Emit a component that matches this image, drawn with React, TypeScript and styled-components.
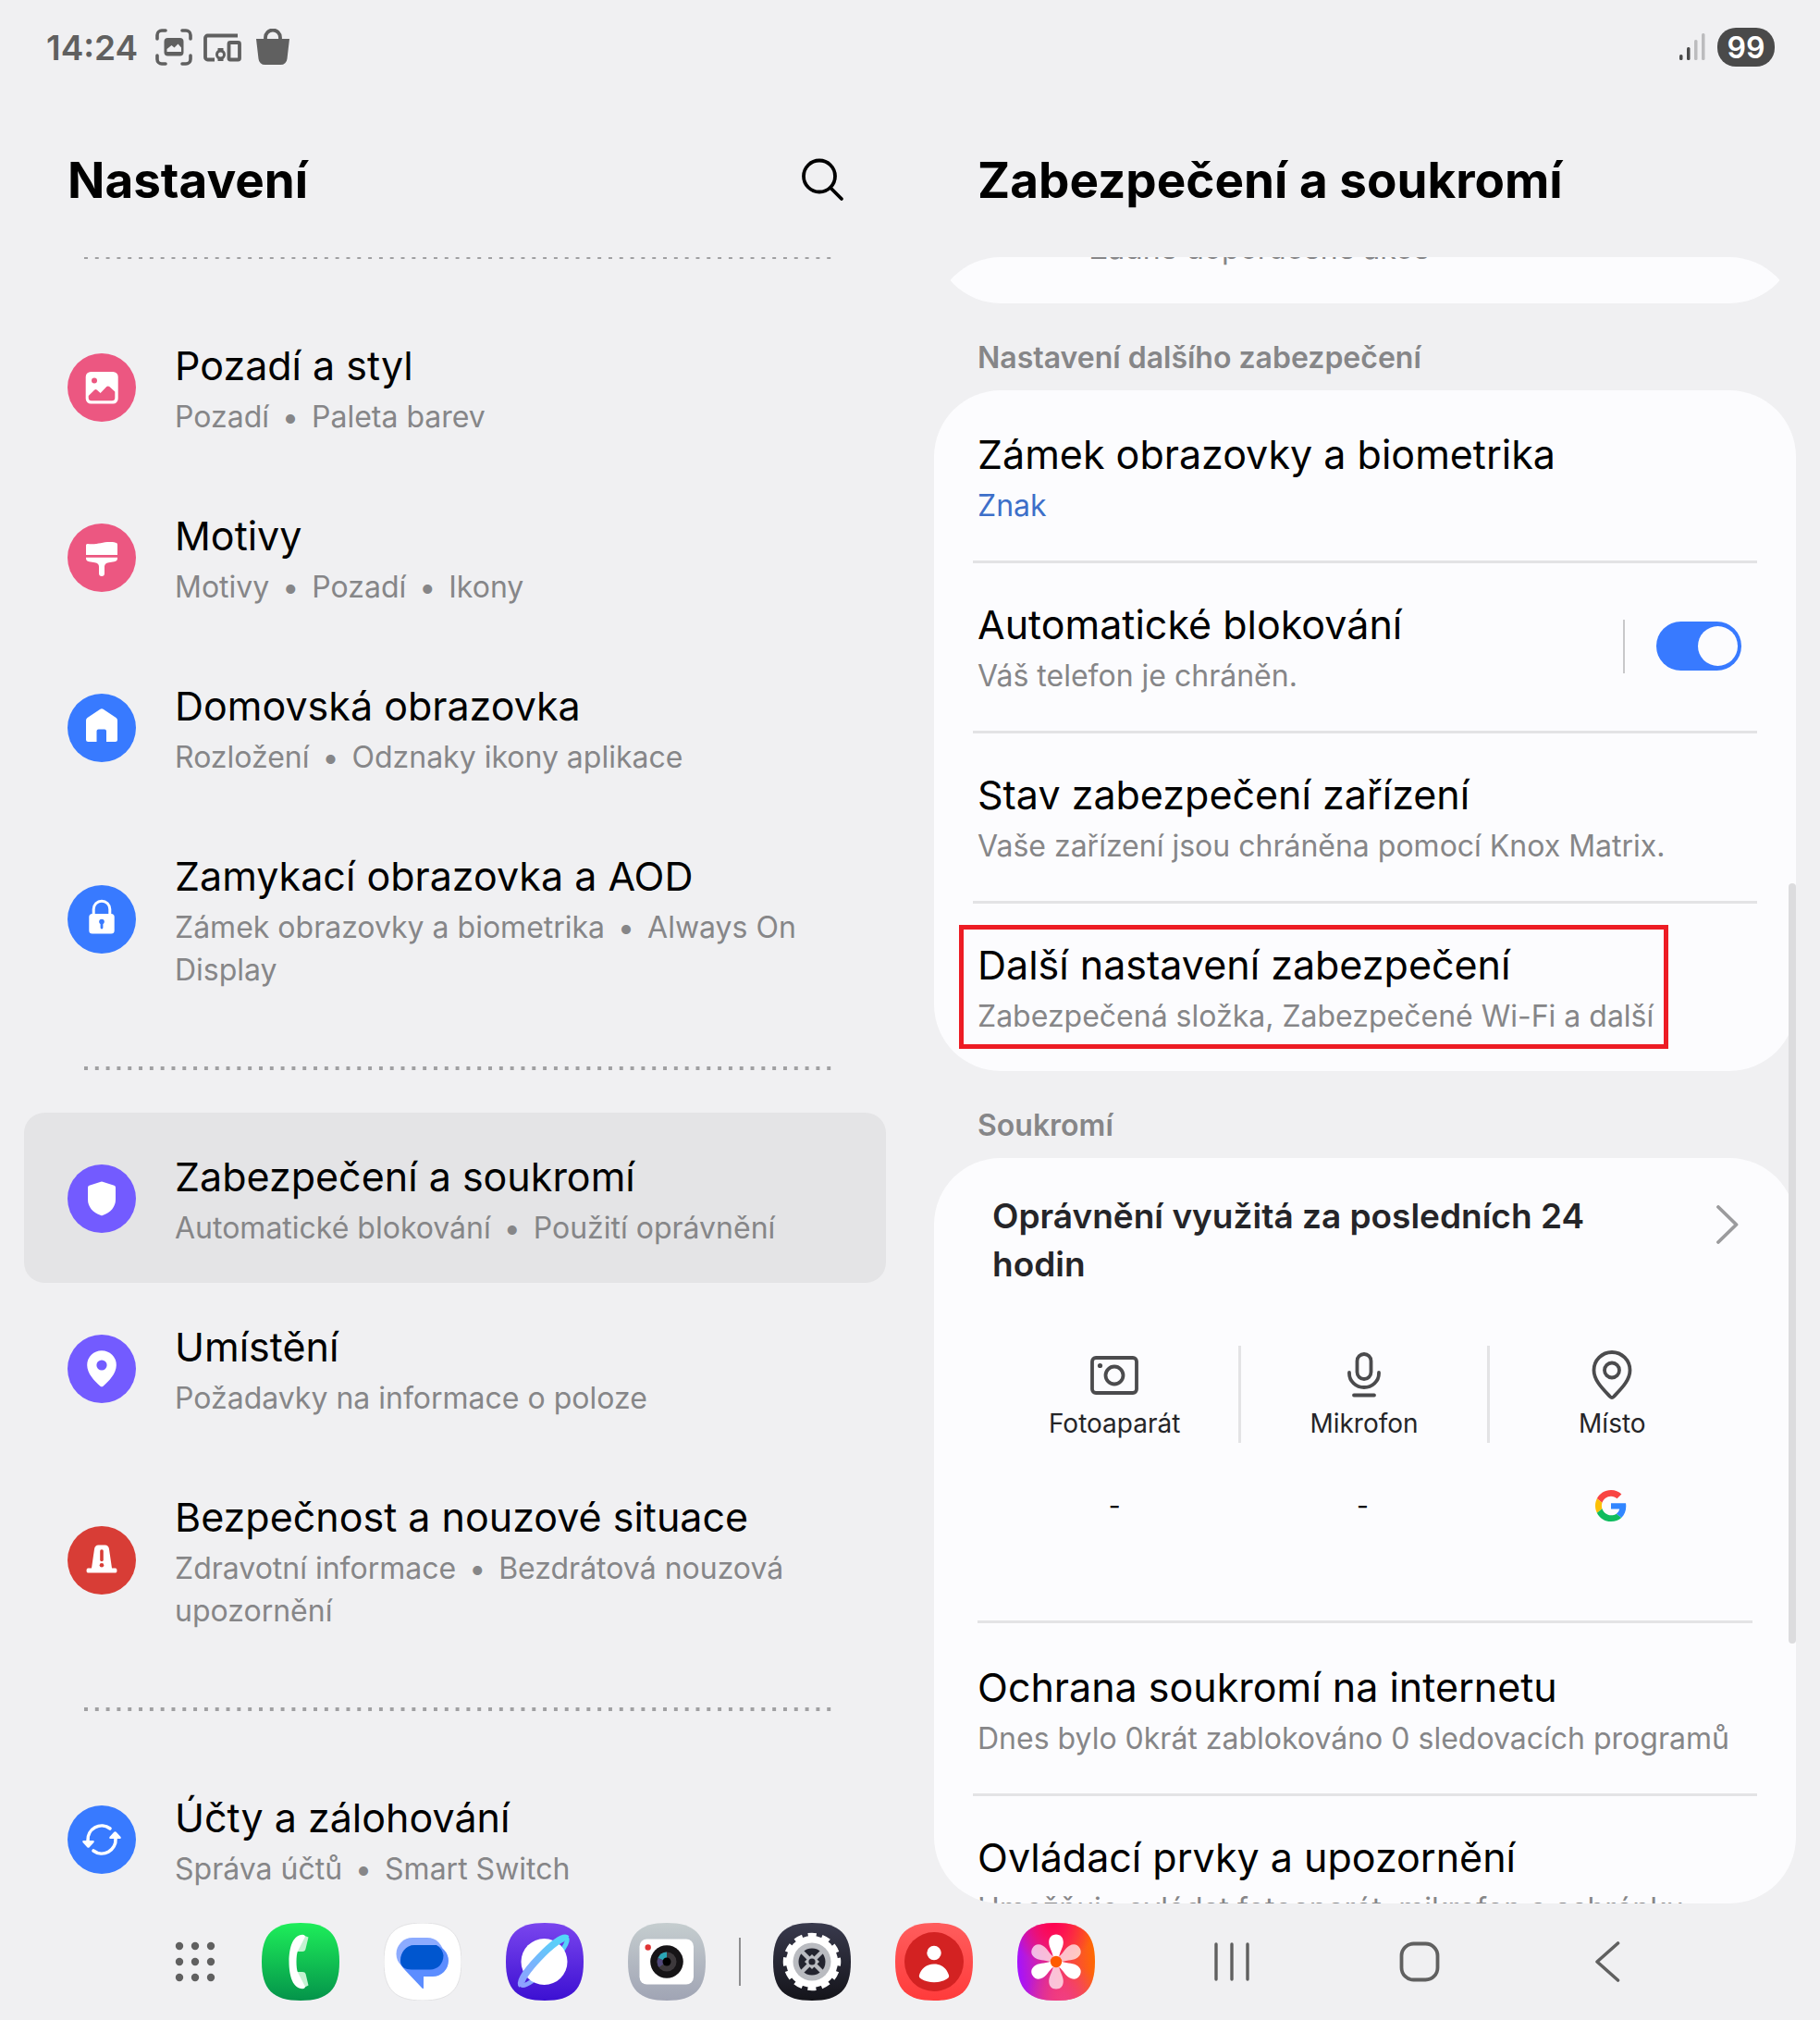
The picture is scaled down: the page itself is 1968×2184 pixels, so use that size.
import React, { ReactNode } from "react";
import styled, { createGlobalStyle } from "styled-components";

const ink = "#000000";
const muted = "#868688";
const page = "#f0f0f2";
const surface = "#fcfcfe";
const line = "#e3e3e5";
const statusInk = "#606060";

const GlobalStyle = createGlobalStyle`
  *, *::before, *::after { box-sizing: border-box; }
  body {
    margin: 0;
    background: ${page};
    color: ${ink};
    font-family: Inter, Roboto, "Noto Sans", sans-serif;
  }
  h1, h2, h3, p, ul { margin: 0; padding: 0; }
  ul { list-style: none; }
  a { color: inherit; text-decoration: none; }
  button { border: 0; padding: 0; background: none; font: inherit; color: inherit; cursor: pointer; }
  svg { display: block; flex: none; }
`;

const Screen = styled.div`
  display: flex;
  flex-direction: column;
  height: 100vh;
  overflow: hidden;
`;

const StatusBar = styled.header`
  display: flex;
  justify-content: space-between;
  align-items: center;
  height: 102px;
  padding: 0 49px 0 50px;
  color: ${statusInk};
`;

const StatusGroup = styled.div`
  display: flex;
  align-items: center;
  gap: 12px;
`;

const Clock = styled.time`
  margin-right: 7px;
  font-size: 37px;
  font-weight: 600;
`;

const Battery = styled.span`
  display: flex;
  align-items: center;
  justify-content: center;
  width: 62px;
  height: 42px;
  border-radius: 20px;
  background: #4a4a4a;
  color: #ffffff;
  font-size: 32px;
  font-weight: 600;
`;

const Panes = styled.div`
  flex: 1;
  min-height: 0;
  display: grid;
  grid-template-columns: 1fr 1fr;
`;

const Pane = styled.section`
  display: flex;
  flex-direction: column;
  min-width: 0;
  min-height: 0;
`;

const PaneHeader = styled.div`
  display: flex;
  align-items: center;
  justify-content: space-between;
  height: 176px;
  padding: 8px 71px 0 73px;
`;

const PaneTitle = styled.h1`
  padding-top: 2px;
  font-size: 53px;
  line-height: 64px;
  font-weight: 700;
`;

const Viewport = styled.div<{ $rounded?: boolean }>`
  position: relative;
  flex: 1;
  min-height: 0;
  margin: 0 26px;
  overflow: hidden;
  border-radius: ${(p) => (p.$rounded ? "72px" : "0")};
`;

const Scrolled = styled.div<{ $by: number }>`
  margin-top: -${(p) => p.$by}px;
`;

const Dots = styled.hr`
  height: 4px;
  margin: 45px 59px 46px 65px;
  border: 0;
  background: linear-gradient(to right, #a0a0a2 4px, transparent 4px) 0 0 / calc((100% - 4px) / 68) 4px;
`;

const MenuRow = styled.a<{ $selected?: boolean }>`
  display: flex;
  align-items: center;
  gap: 42px;
  min-height: 184px;
  padding: 37px 40px 36px 47px;
  border-radius: 22px;
  background: ${(p) => (p.$selected ? "#e4e4e6" : "transparent")};
`;

const RowText = styled.div`
  flex: 1;
  min-width: 0;
`;

const RowTitle = styled.h3`
  margin-bottom: 1px;
  font-size: 43px;
  line-height: 64px;
  font-weight: 400;
`;

const RowNote = styled.p<{ $accent?: boolean }>`
  font-size: 32px;
  line-height: 46px;
  color: ${(p) => (p.$accent ? "#3d6fc9" : muted)};
`;

const Bullet = styled.span`
  margin: 0 5px;
`;

const Card = styled.div`
  border-radius: 72px;
  background: ${surface};
`;

const TipCard = styled(Card)`
  display: flex;
  align-items: flex-end;
  height: 184px;
  padding: 0 48px 36px 168px;
`;

const SectionTitle = styled.h2`
  height: 94px;
  padding: 36px 47px 0;
  font-size: 32px;
  line-height: 46px;
  font-weight: 600;
  color: ${muted};
`;

const CardRow = styled.li`
  padding: 0 42px;
  & + & > * { border-top: 3px solid ${line}; padding-top: 34px; }
`;

const CardRowBody = styled.div`
  display: flex;
  align-items: center;
  height: 184px;
  padding: 37px 12px 36px 5px;
`;

const Highlight = styled.div`
  position: relative;
  &::after {
    content: "";
    position: absolute;
    inset: -11px -16px -12px -20px;
    border: 5px solid #ed1c24;
  }
`;

const SwitchWrap = styled.div`
  display: flex;
  align-items: center;
  height: 58px;
  padding-left: 34px;
  border-left: 2px solid #c8c8ca;
`;

const Switch = styled.input`
  appearance: none;
  display: flex;
  align-items: center;
  justify-content: flex-end;
  width: 92px;
  height: 53px;
  margin: 0 5px 0 0;
  padding: 4px;
  border-radius: 27px;
  background: #387aff;
  &::before {
    content: "";
    width: 43px;
    height: 43px;
    border-radius: 50%;
    background: ${surface};
  }
  &:not(:checked) { justify-content: flex-start; background: #b5b5b8; }
`;

const Permissions = styled.div`
  height: 503px;
  margin: 0 47px;
  padding: 37px 15px 0 14px;
  border-bottom: 3px solid ${line};
`;

const PermissionsHead = styled.a`
  display: flex;
  justify-content: space-between;
  align-items: flex-start;
  gap: 40px;
  padding-left: 2px;
  & > svg { margin-top: 14px; }
`;

const PermissionsTitle = styled.h3`
  max-width: 680px;
  font-size: 37px;
  line-height: 52px;
  font-weight: 600;
  color: #252528;
`;

const PermissionGrid = styled.ul`
  display: grid;
  grid-template-columns: repeat(3, 1fr);
  margin: 62px 4px 0 0;
`;

const Permission = styled.li`
  display: flex;
  flex-direction: column;
  align-items: center;
  & + & > div { border-left: 3px solid ${line}; }
`;

const PermissionKind = styled.div`
  display: flex;
  flex-direction: column;
  align-items: center;
  gap: 5px;
  align-self: stretch;
  height: 105px;
  padding-top: 5px;
  font-size: 28px;
  line-height: 40px;
  color: #252528;
`;

const PermissionUse = styled.span`
  display: flex;
  align-items: center;
  justify-content: center;
  height: 52px;
  margin-top: 42px;
  font-size: 28px;
`;

const ScrollThumb = styled.div`
  position: absolute;
  top: 955px;
  right: 26px;
  width: 8px;
  height: 822px;
  border-radius: 4px;
  background: #dcdcde;
`;

const Dock = styled.nav`
  display: flex;
  align-items: center;
  justify-content: space-between;
  height: 126px;
  padding: 0 208px 0 185px;
`;

const DockApps = styled.div`
  display: flex;
  align-items: center;
  gap: 46px;
`;

const DockGroup = styled.div`
  display: flex;
  align-items: center;
  gap: 48px;
  & + & { margin-left: -10px; padding-left: 35px; border-left: 2px solid #8e8e90; height: 52px; }
`;

const NavKeys = styled.div`
  display: flex;
  align-items: center;
  gap: 159px;
`;

/* ---------- status icons ---------- */

const CaptureIcon = () => (
  <svg width="40" height="40" viewBox="0 0 40 40" fill="none">
    <path d="M2 11V7a5 5 0 0 1 5-5h4M29 2h4a5 5 0 0 1 5 5v4M38 29v4a5 5 0 0 1-5 5h-4M11 38H7a5 5 0 0 1-5-5v-4" stroke={statusInk} strokeWidth="3.6" strokeLinecap="round" />
    <rect x="9.5" y="10" width="21" height="19.5" rx="4" fill={statusInk} />
    <path d="M12.5 25v-3l5-4 3 2.500 4-4 3.500 4V25z" fill={page} />
  </svg>
);

const DevicesIcon = () => (
  <svg width="43" height="32" viewBox="0 0 43 32" fill="none" stroke={statusInk} strokeWidth="3.800">
    <path d="M37 3.500H4.500a2.500 2.500 0 0 0-2.500 2.500V27a2.500 2.500 0 0 0 2.500 2.500H12" />
    <rect x="27.500" y="11" width="11.500" height="18.500" rx="1.500" />
    <circle cx="18.500" cy="24" r="4" strokeWidth="3" />
    <path d="M15.500 18.500h6M15.500 29.500h6" strokeWidth="3" />
  </svg>
);

const BagIcon = () => (
  <svg width="40" height="40" viewBox="0 0 40 40">
    <path d="M2 11h36l-2.500 21.500A7 7 0 0 1 28.500 39h-17a7 7 0 0 1-7-6.500z" fill={statusInk} />
    <path d="M12 12V9.500a8 8 0 0 1 16 0V12" fill="none" stroke={statusInk} strokeWidth="3.800" />
  </svg>
);

const SignalIcon = () => (
  <svg width="30" height="32" viewBox="0 0 30 32">
    <rect x="1" y="24" width="3.500" height="6" rx="1.500" fill="#4a4a4a" />
    <rect x="9" y="16" width="3.500" height="14" rx="1.500" fill="#4a4a4a" />
    <rect x="17" y="8" width="3.500" height="22" rx="1.500" fill="#bcbcbe" />
    <rect x="25" y="1" width="3.500" height="29" rx="1.500" fill="#bcbcbe" />
  </svg>
);

const SearchIcon = () => (
  <svg width="48" height="48" viewBox="0 0 48 48" fill="none" stroke={ink} strokeWidth="3.800" strokeLinecap="round">
    <circle cx="21" cy="20.500" r="17" />
    <path d="M33 33l12 12" />
  </svg>
);

/* ---------- menu icons ---------- */

const Disc = ({ color, children }: { color: string; children: ReactNode }) => (
  <svg width="74" height="74" viewBox="0 0 74 74" aria-hidden="true">
    <circle cx="37" cy="37" r="37" fill={color} />
    {children}
  </svg>
);

const PINK = "#ec5781";
const BLUE = "#387aff";
const VIOLET = "#735bff";
const RED = "#d83d36";

const WallpaperIcon = () => (
  <Disc color={PINK}>
    <rect x="19.700" y="20" width="35" height="34.600" rx="5.500" fill="#fff" />
    <circle cx="29" cy="29.500" r="3" fill={PINK} />
    <path d="M22.700 46l6.300-6.200a2.200 2.200 0 0 1 3 0l3.600 3.300 6.700-7a2.200 2.200 0 0 1 3 0l6 5.500V48a3.300 3.300 0 0 1-3.300 3.300H26a3.300 3.300 0 0 1-3.300-3.300z" fill={PINK} />
  </Disc>
);

const ThemeIcon = () => (
  <Disc color={PINK}>
    <path d="M20 34V23.500q0-1.800 1.800-1.600c10 1.200 15-2 24-2 4 0 6 .5 7.200 1.200q1 .7 1 2V34z" fill="#fff" />
    <path d="M20 36.800h34v1c0 2-1 3-3.500 3.400l-6 1c-3 .6-4.500 2-4.500 4.500V54a3 3 0 0 1-6 0v-7.300c0-2.500-1.500-3.900-4.500-4.500l-6-1C21 40.800 20 39.800 20 37.800z" fill="#fff" />
  </Disc>
);

const HomeIcon = () => (
  <Disc color={BLUE}>
    <path d="M35 17q2-1.500 4 0l13.500 9q1.500 1 1.500 3v20.500q0 2.500-2.500 2.500H42V40.500q0-2-2-2h-6.500q-2 0-2 2V52h-9q-2.500 0-2.500-2.500V29q0-2 1.500-3z" fill="#fff" />
  </Disc>
);

const LockIcon = () => (
  <Disc color={BLUE}>
    <path d="M28.200 32v-6a8.800 8.800 0 0 1 17.600 0v6" fill="none" stroke="#fff" strokeWidth="3" />
    <rect x="23.300" y="31" width="27.400" height="21.500" rx="3.500" fill="#fff" />
    <circle cx="37" cy="39.500" r="2.800" fill={BLUE} />
    <path d="M37 40v6" stroke={BLUE} strokeWidth="2.800" strokeLinecap="round" />
  </Disc>
);

const ShieldIcon = () => (
  <Disc color={VIOLET}>
    <path d="M36 18.700q1-.5 2 0l12.500 4q1.500.6 1.500 2.300v13c0 8-5.500 14-14 17q-1 .4-2 0c-8.500-3-14-9-14-17V25q0-1.700 1.500-2.300z" fill="#fff" />
  </Disc>
);

const PlaceIcon = () => (
  <Disc color={VIOLET}>
    <path d="M37 17.200a15.800 15.800 0 0 1 15.800 15.800c0 9-7.800 17-14.300 22.700q-1.500 1.200-3 0C29 50 21.200 42 21.200 33A15.800 15.800 0 0 1 37 17.200z" fill="#fff" />
    <circle cx="37" cy="33" r="5.600" fill={VIOLET} />
  </Disc>
);

const EmergencyIcon = () => (
  <Disc color={RED}>
    <path d="M29 25q.5-4.500 4.500-4.500h7q4 0 4.500 4.500l3 20.500h4q1.500 0 1.500 2.500t-1.500 2.500h-30q-1.500 0-1.500-2.500t1.500-2.500h4z" fill="#fff" />
    <path d="M37 27v9.500" stroke={RED} strokeWidth="3.600" strokeLinecap="round" />
    <circle cx="37" cy="42.300" r="2.300" fill={RED} />
  </Disc>
);

const SyncIcon = () => (
  <Disc color={BLUE}>
    <g fill="none" stroke="#fff" strokeWidth="3.600" strokeLinecap="round">
      <path d="M22 38a15 15 0 0 1 24-13" />
      <path d="M52 36a15 15 0 0 1-24 13" />
    </g>
    <path d="M17 38h11q1.500.5.500 2l-4.800 5.200q-1.200 1-2.400 0L16.500 40q-1-1.500.500-2zM57 36H46q-1.500-.5-.5-2l4.800-5.200q1.200-1 2.400 0L57.500 34q1 1.500-.5 2z" fill="#fff" />
  </Disc>
);

/* ---------- permission icons ---------- */

const thin = { fill: "none", stroke: "#4b4b4d", strokeWidth: 3.8, strokeLinecap: "round" as const };

const ChevronIcon = () => (
  <svg width="24" height="42" viewBox="0 0 24 42" fill="none" stroke="#9b9b9d" strokeWidth="3.800" strokeLinecap="round" strokeLinejoin="round">
    <path d="M2 2l19.500 19L2 40" />
  </svg>
);

const CameraIcon = () => (
  <svg width="54" height="54" viewBox="0 0 54 54" {...thin}>
    <rect x="3" y="8" width="48" height="38" rx="4" />
    <circle cx="27" cy="27" r="9.500" />
    <circle cx="11.500" cy="16.500" r="2.600" fill="#4b4b4d" stroke="none" />
  </svg>
);

const MicIcon = () => (
  <svg width="54" height="54" viewBox="0 0 54 54" {...thin}>
    <rect x="19.500" y="4" width="15" height="27" rx="7.500" />
    <path d="M11 24v1a16 15 0 0 0 32 0v-1M16 48.500h22" />
  </svg>
);

const PinIcon = () => (
  <svg width="54" height="54" viewBox="0 0 54 54" {...thin} strokeLinejoin="round">
    <path d="M27 2A19.500 19.500 0 0 1 46.500 21.500c0 11-9.500 20-17.500 28.500q-2 2-4 0C17 41.500 7.500 32.500 7.500 21.500A19.500 19.500 0 0 1 27 2z" />
    <circle cx="27" cy="21.500" r="8" />
  </svg>
);

const GoogleLogo = () => (
  <svg width="34" height="34" viewBox="0 0 48 48" role="img" aria-label="Google">
    <path fill="#f94543" d="M24 9.500c3.540 0 6.710 1.220 9.210 3.600l6.850-6.850C35.900 2.380 30.470 0 24 0 14.620 0 6.510 5.380 2.560 13.220l7.980 6.190C12.430 13.720 17.740 9.500 24 9.500z" />
    <path fill="#3186ff" d="M46.980 24.550c0-1.570-.150-3.090-.380-4.550H24v9.020h12.940c-.580 2.960-2.260 5.480-4.780 7.180l7.730 6c4.510-4.180 7.090-10.360 7.090-17.650z" />
    <path fill="#fcc006" d="M10.530 28.590c-.480-1.450-.760-2.990-.760-4.590s.270-3.140.760-4.590l-7.980-6.190C.920 16.460 0 20.120 0 24c0 3.880.920 7.540 2.560 10.780l7.970-6.190z" />
    <path fill="#0ebc5f" d="M24 48c6.480 0 11.930-2.130 15.890-5.810l-7.730-6c-2.150 1.450-4.920 2.300-8.160 2.300-6.260 0-11.570-4.220-13.470-9.910l-7.980 6.190C6.510 42.620 14.620 48 24 48z" />
  </svg>
);

/* ---------- dock icons ---------- */

const SQUIRCLE = "M42 0C72 0 84 12 84 42S72 84 42 84 0 72 0 42 12 0 42 0z";

const Tile = ({ id, from, to, children }: { id: string; from: string; to: string; children: ReactNode }) => (
  <svg width="84" height="84" viewBox="0 0 84 84">
    <defs>
      <linearGradient id={id} x1="0" y1="0" x2="0" y2="1">
        <stop offset="0" stopColor={from} />
        <stop offset="1" stopColor={to} />
      </linearGradient>
    </defs>
    <path d={SQUIRCLE} fill={`url(#${id})`} />
    {children}
  </svg>
);

const AppsIcon = () => (
  <svg width="52" height="52" viewBox="0 0 52 52" fill={statusInk}>
    {[9, 26, 43].map((y) => [9, 26, 43].map((x) => <circle key={`${x}-${y}`} cx={x} cy={y} r="4.2" />))}
  </svg>
);

const PhoneApp = () => (
  <Tile id="phone" from="#1eee5a" to="#04934a">
    <path d="M44 13l6.500 2.500L47.500 28q-.5 3-3.500 3h-6zM44 71l6.500-3.500-3-12.500q-.5-2-3.500-2h-6z" fill="#c4f2d2" />
    <path d="M44 12.700C34 13 29.500 26 29.500 42S34 71 44 71.300c2.500 0 3.500-1.500 2.500-3.300L39 53.500c-2-4-2-19 0-23L46.500 16c1-2 0-3.300-2.500-3.300z" fill="#fff" />
  </Tile>
);

const MessagesApp = () => (
  <Tile id="messages" from="#ffffff" to="#ffffff">
    <path d={SQUIRCLE} fill="none" stroke="#e2e2e4" strokeWidth="1" />
    <rect x="13.500" y="16" width="51" height="35" rx="17.500" fill="#8cabff" />
    <path d="M35 24h18a17 17 0 0 1 0 34H43v12q0 2-1.600.5L22 50c-3-3-4-6-4-10a16 16 0 0 1 17-16z" fill="#5c8dff" />
    <path d="M33 24h24a16 16 0 0 1 7.500 11c0 9-6 15.500-14.500 15.500H30c-7 0-12-3-12-9.500 0-9 6-17 15-17z" fill="#0056cf" />
  </Tile>
);

const InternetApp = () => (
  <Tile id="internet" from="#7a45ee" to="#3c10d2">
    <defs>
      <linearGradient id="ring" x1="0" y1="0" x2="1" y2="0">
        <stop offset="0" stopColor="#8fa0ff" />
        <stop offset="1" stopColor="#50d8f8" />
      </linearGradient>
    </defs>
    <g transform="rotate(-46 41.500 42)">
      <ellipse cx="41.500" cy="42" rx="35" ry="7" fill="none" stroke="url(#ring)" strokeWidth="5" />
    </g>
    <circle cx="41.500" cy="42" r="25" fill="#fff" />
    <path transform="rotate(-46 41.500 42)" d="M6.500 42c0-9.500 70-9.500 70 0" fill="none" stroke="url(#ring)" strokeWidth="7.500" />
  </Tile>
);

const CameraApp = () => (
  <Tile id="camera" from="#c5cdcf" to="#a0a4b4">
    <rect x="12.500" y="17.500" width="58.500" height="49" rx="8" fill="#fff" />
    <circle cx="21.700" cy="26.500" r="3.200" fill="#e03434" />
    <circle cx="42" cy="42" r="17.800" fill="#161416" />
    <circle cx="42" cy="42" r="10.500" fill="#3d393c" />
    <path d="M42 42V31.500A10.500 10.500 0 0 0 32.500 38z" fill="#2ba6b5" />
    <path d="M42 42l-9.500-4a10.500 10.500 0 0 0 1 10z" fill="#51497a" />
    <circle cx="42" cy="42" r="4.500" fill="#000" />
  </Tile>
);

const SettingsApp = () => (
  <Tile id="settings" from="#393a4d" to="#14141a">
    <circle cx="42" cy="42" r="28" fill="#fff" />
    <circle cx="42" cy="42" r="29" fill="none" stroke="#fff" strokeWidth="4.500" strokeDasharray="9 6.184" strokeDashoffset="4.500" />
    <circle cx="42" cy="42" r="20.500" fill="#b9bbc0" />
    <circle cx="42" cy="42" r="14.500" fill="#23242f" />
    <path d="M31 31l22 22M53 31L31 53" stroke="#b9bbc0" strokeWidth="4.500" />
    <path d="M42 42m-8 0l8-8 8 8-8 8z" fill="#b9bbc0" />
    <circle cx="42" cy="42" r="3.600" fill="#23242f" />
  </Tile>
);

const ContactsApp = () => (
  <Tile id="contacts" from="#ff5d5d" to="#ff3b3b">
    <circle cx="42" cy="42" r="32" fill="#d32222" />
    <circle cx="42" cy="32.500" r="7.700" fill="#fff" />
    <path d="M42 44.500c8.500 0 14 5 16 12 .5 2-.3 3-2 4-8 5-20 5-28 0-1.700-1-2.500-2-2-4 2-7 7.500-12 16-12z" fill="#fff" />
  </Tile>
);

const GalleryApp = () => (
  <svg width="84" height="84" viewBox="0 0 84 84">
    <defs>
      <linearGradient id="g-base" x1="0" y1="0.550" x2="1" y2="0.450">
        <stop offset="0" stopColor="#a412ff" />
        <stop offset="0.500" stopColor="#f4306c" />
        <stop offset="1" stopColor="#ff6a00" />
      </linearGradient>
      <radialGradient id="g-top" cx="0.450" cy="0" r="0.550">
        <stop offset="0" stopColor="#ff0050" />
        <stop offset="1" stopColor="#ff0050" stopOpacity="0" />
      </radialGradient>
      <radialGradient id="g-bottom" cx="0.600" cy="1" r="0.500">
        <stop offset="0" stopColor="#f03f83" />
        <stop offset="1" stopColor="#f03f83" stopOpacity="0" />
      </radialGradient>
    </defs>
    <path d={SQUIRCLE} fill="url(#g-base)" />
    <path d={SQUIRCLE} fill="url(#g-top)" />
    <path d={SQUIRCLE} fill="url(#g-bottom)" />
    {[60, 180, 300, 0, 120, 240].map((angle, i) => (
      <path key={angle} transform={`rotate(${angle} 42 42)`} d="M42 12.500c5 0 7.800 3.500 7.800 8.500 0 6-4.800 11-5 19h-5.600c-.2-8-5-13-5-19 0-5 2.800-8.500 7.800-8.500z" fill="#fff" fillOpacity={i < 3 ? 0.7 : 1} />
    ))}
    <circle cx="42" cy="42" r="6.200" fill="#ff5a00" />
  </svg>
);

const RecentsIcon = () => (
  <svg width="44" height="44" viewBox="0 0 44 44" stroke={statusInk} strokeWidth="3.400" strokeLinecap="round">
    <path d="M5 3v38M22 3v38M39 3v38" />
  </svg>
);

const HomeKeyIcon = () => (
  <svg width="44" height="44" viewBox="0 0 44 44" fill="none" stroke={statusInk} strokeWidth="3.800">
    <rect x="2.500" y="2.500" width="39" height="39" rx="13" />
  </svg>
);

const BackIcon = () => (
  <svg width="44" height="44" viewBox="0 0 44 44" fill="none" stroke={statusInk} strokeWidth="3.600" strokeLinecap="round" strokeLinejoin="round">
    <path d="M33.500 2L11 22l22.500 20" />
  </svg>
);

/* ---------- data ---------- */

type MenuItem = { title: string; notes: string[]; icon: ReactNode; selected?: boolean };

const menu: MenuItem[][] = [
  [
    { title: "Pozadí a styl", notes: ["Pozadí", "Paleta barev"], icon: <WallpaperIcon /> },
    { title: "Motivy", notes: ["Motivy", "Pozadí", "Ikony"], icon: <ThemeIcon /> },
    { title: "Domovská obrazovka", notes: ["Rozložení", "Odznaky ikony aplikace"], icon: <HomeIcon /> },
    { title: "Zamykací obrazovka a AOD", notes: ["Zámek obrazovky a biometrika", "Always On Display"], icon: <LockIcon /> },
  ],
  [
    { title: "Zabezpečení a soukromí", notes: ["Automatické blokování", "Použití oprávnění"], icon: <ShieldIcon />, selected: true },
    { title: "Umístění", notes: ["Požadavky na informace o poloze"], icon: <PlaceIcon /> },
    { title: "Bezpečnost a nouzové situace", notes: ["Zdravotní informace", "Bezdrátová nouzová upozornění"], icon: <EmergencyIcon /> },
  ],
  [{ title: "Účty a zálohování", notes: ["Správa účtů", "Smart Switch"], icon: <SyncIcon /> }],
];

const permissions = [
  { name: "Fotoaparát", icon: <CameraIcon />, use: "-" as ReactNode },
  { name: "Mikrofon", icon: <MicIcon />, use: "-" as ReactNode },
  { name: "Místo", icon: <PinIcon />, use: <GoogleLogo /> },
];

const Notes = ({ items }: { items: string[] }) => (
  <RowNote>
    {items.map((item, i) => (
      <React.Fragment key={item}>
        {i > 0 && <> <Bullet>•</Bullet> </>}
        {item}
      </React.Fragment>
    ))}
  </RowNote>
);

const apps = [
  [
    { name: "Telefon", icon: <PhoneApp /> },
    { name: "Zprávy", icon: <MessagesApp /> },
    { name: "Internet", icon: <InternetApp /> },
    { name: "Fotoaparát", icon: <CameraApp /> },
  ],
  [
    { name: "Nastavení", icon: <SettingsApp /> },
    { name: "Kontakty", icon: <ContactsApp /> },
    { name: "Galerie", icon: <GalleryApp /> },
  ],
];

export default function App() {
  return (
    <Screen>
      <GlobalStyle />
      <StatusBar>
        <StatusGroup>
          <Clock>14:24</Clock>
          <CaptureIcon />
          <DevicesIcon />
          <BagIcon />
        </StatusGroup>
        <StatusGroup>
          <SignalIcon />
          <Battery>99</Battery>
        </StatusGroup>
      </StatusBar>

      <Panes>
        <Pane>
          <PaneHeader>
            <PaneTitle>Nastavení</PaneTitle>
            <button aria-label="Hledat"><SearchIcon /></button>
          </PaneHeader>
          <Viewport>
            <Scrolled $by={47}>
              {menu.map((group, g) => (
                <div key={g}>
                  <Dots />
                  <ul>
                    {group.map((item) => (
                      <li key={item.title}>
                        <MenuRow href="#" $selected={item.selected}>
                          {item.icon}
                          <RowText>
                            <RowTitle>{item.title}</RowTitle>
                            <Notes items={item.notes} />
                          </RowText>
                        </MenuRow>
                      </li>
                    ))}
                  </ul>
                </div>
              ))}
            </Scrolled>
          </Viewport>
        </Pane>

        <Pane>
          <PaneHeader>
            <PaneTitle>Zabezpečení a soukromí</PaneTitle>
          </PaneHeader>
          <Viewport $rounded>
            <Scrolled $by={134}>
              <TipCard><RowNote>Žádné doporučené akce</RowNote></TipCard>

              <SectionTitle>Nastavení dalšího zabezpečení</SectionTitle>
              <Card as="ul">
                <CardRow>
                  <CardRowBody as="a" href="#">
                    <RowText>
                      <RowTitle>Zámek obrazovky a biometrika</RowTitle>
                      <RowNote $accent>Znak</RowNote>
                    </RowText>
                  </CardRowBody>
                </CardRow>
                <CardRow>
                  <CardRowBody>
                    <RowText as="label" htmlFor="auto-block">
                      <RowTitle>Automatické blokování</RowTitle>
                      <RowNote>Váš telefon je chráněn.</RowNote>
                    </RowText>
                    <SwitchWrap>
                      <Switch id="auto-block" type="checkbox" role="switch" defaultChecked />
                    </SwitchWrap>
                  </CardRowBody>
                </CardRow>
                <CardRow>
                  <CardRowBody as="a" href="#">
                    <RowText>
                      <RowTitle>Stav zabezpečení zařízení</RowTitle>
                      <RowNote>Vaše zařízení jsou chráněna pomocí Knox Matrix.</RowNote>
                    </RowText>
                  </CardRowBody>
                </CardRow>
                <CardRow>
                  <CardRowBody as="a" href="#">
                    <Highlight>
                      <RowTitle>Další nastavení zabezpečení</RowTitle>
                      <RowNote>Zabezpečená složka, Zabezpečené Wi-Fi a další</RowNote>
                    </Highlight>
                  </CardRowBody>
                </CardRow>
              </Card>

              <SectionTitle>Soukromí</SectionTitle>
              <Card>
                <Permissions>
                  <PermissionsHead href="#">
                    <PermissionsTitle>Oprávnění využitá za posledních 24 hodin</PermissionsTitle>
                    <ChevronIcon />
                  </PermissionsHead>
                  <PermissionGrid>
                    {permissions.map((p) => (
                      <Permission key={p.name}>
                        <PermissionKind>{p.icon}{p.name}</PermissionKind>
                        <PermissionUse>{p.use}</PermissionUse>
                      </Permission>
                    ))}
                  </PermissionGrid>
                </Permissions>
                <ul>
                  <CardRow>
                    <CardRowBody as="a" href="#">
                      <RowText>
                        <RowTitle>Ochrana soukromí na internetu</RowTitle>
                        <RowNote>Dnes bylo 0krát zablokováno 0 sledovacích programů</RowNote>
                      </RowText>
                    </CardRowBody>
                  </CardRow>
                  <CardRow>
                    <CardRowBody as="a" href="#">
                      <RowText>
                        <RowTitle>Ovládací prvky a upozornění</RowTitle>
                        <RowNote>Umožňuje ovládat fotoaparát, mikrofon a schránku.</RowNote>
                      </RowText>
                    </CardRowBody>
                  </CardRow>
                </ul>
              </Card>
            </Scrolled>
          </Viewport>
        </Pane>
      </Panes>
      <ScrollThumb />

      <Dock>
        <DockApps>
          <button aria-label="Aplikace"><AppsIcon /></button>
          {apps.map((group, i) => (
            <DockGroup key={i}>
              {group.map((app) => (
                <button key={app.name} aria-label={app.name}>{app.icon}</button>
              ))}
            </DockGroup>
          ))}
        </DockApps>
        <NavKeys>
          <button aria-label="Poslední aplikace"><RecentsIcon /></button>
          <button aria-label="Domů"><HomeKeyIcon /></button>
          <button aria-label="Zpět"><BackIcon /></button>
        </NavKeys>
      </Dock>
    </Screen>
  );
}
